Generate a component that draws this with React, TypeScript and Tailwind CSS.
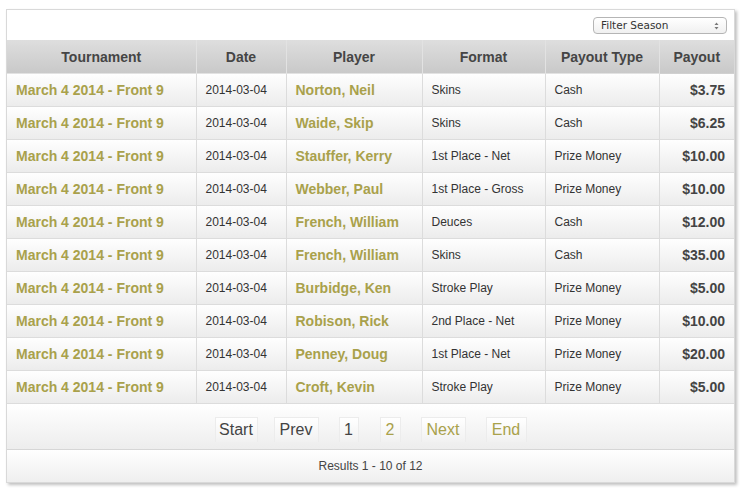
import React from "react";

const rows = [
  ["Norton, Neil", "Skins", "Cash", "$3.75"],
  ["Waide, Skip", "Skins", "Cash", "$6.25"],
  ["Stauffer, Kerry", "1st Place - Net", "Prize Money", "$10.00"],
  ["Webber, Paul", "1st Place - Gross", "Prize Money", "$10.00"],
  ["French, William", "Deuces", "Cash", "$12.00"],
  ["French, William", "Skins", "Cash", "$35.00"],
  ["Burbidge, Ken", "Stroke Play", "Prize Money", "$5.00"],
  ["Robison, Rick", "2nd Place - Net", "Prize Money", "$10.00"],
  ["Penney, Doug", "1st Place - Net", "Prize Money", "$20.00"],
  ["Croft, Kevin", "Stroke Play", "Prize Money", "$5.00"],
];

const cols = [
  { name: "Tournament", w: "w-[189px]" },
  { name: "Date", w: "w-[90px]" },
  { name: "Player", w: "w-[136px]" },
  { name: "Format", w: "w-[123px]" },
  { name: "Payout Type", w: "w-[114px]" },
  { name: "Payout", w: "w-[75px]" },
];

const btn = "h-[25px] flex items-center justify-center border-t border-x border-[#ececec] bg-gradient-to-b from-white to-[#f1f1f1]";

export default function App() {
  return (
    <div className="w-[743px] h-[495px] bg-white pt-[9px] pl-[6px]" style={{ fontFamily: '"Liberation Sans", Arial, sans-serif' }}>
      <div className="w-[729px] border border-[#d9d9d9] bg-white shadow-[2px_2px_3px_rgba(0,0,0,0.25)]">
        <div className="h-[30px] flex items-center justify-end pr-[7px] pt-[1px]">
          <div className="w-[134px] h-[17px] rounded-[4px] border border-[#b5b5b5] bg-gradient-to-b from-white to-[#f0f0f0] flex items-center justify-between pl-[7px] pr-[7px] text-[#333]" style={{ fontFamily: '"DejaVu Sans", sans-serif', fontSize: "10.5px" }}>
            <span>Filter Season</span>
            <svg width="5" height="8" viewBox="0 0 5 8">
              <path d="M0.5 3 L2.5 0.5 L4.5 3 Z" fill="#777" />
              <path d="M0.5 5 L2.5 7.5 L4.5 5 Z" fill="#777" />
            </svg>
          </div>
        </div>
        <table className="border-collapse table-fixed w-[727px]">
          <thead>
            <tr className="h-[33px] bg-gradient-to-b from-[#dedede] to-[#c9c9c9]">
              {cols.map((c, i) => (
                <th key={c.name} className={`${c.w} text-[14px] font-bold text-[#454545] text-center ${i < 5 ? "border-r border-[#e2e2e2]" : ""} border-b border-[#d0d0d0] p-0 pt-[2px]`}>
                  {c.name}
                </th>
              ))}
            </tr>
          </thead>
          <tbody>
            {rows.map((r, idx) => (
              <tr key={idx} className="h-[33px] bg-gradient-to-b from-white to-[#ececec]">
                <td className="p-0 pt-[2px] pl-[9px] text-[14px] font-bold text-[#a9a14b] border-r border-b border-[#dcdcdc]">March 4 2014 - Front 9</td>
                <td className="p-0 pt-[1px] pl-[9px] text-[12px] text-[#333] border-r border-b border-[#dcdcdc]">2014-03-04</td>
                <td className="p-0 pt-[2px] pl-[9px] text-[14px] font-bold text-[#a9a14b] border-r border-b border-[#dcdcdc]">{r[0]}</td>
                <td className="p-0 pt-[1px] pl-[9px] text-[12px] text-[#333] border-r border-b border-[#dcdcdc]">{r[1]}</td>
                <td className="p-0 pt-[1px] pl-[9px] text-[12px] text-[#333] border-r border-b border-[#dcdcdc]">{r[2]}</td>
                <td className="p-0 pt-[2px] pr-[9px] text-[14px] font-bold text-[#444] text-right border-b border-[#dcdcdc]">{r[3]}</td>
              </tr>
            ))}
          </tbody>
        </table>
        <div className="h-[46px] border-b border-[#d6d6d6] bg-gradient-to-b from-white to-[#ededed] flex items-center justify-center text-[16px] pt-[6px]">
          <span className={`${btn} w-[43px] text-[#444]`}>Start</span>
          <span className={`${btn} w-[45px] ml-[16px] text-[#444]`}>Prev</span>
          <span className={`${btn} w-[20px] ml-[20px] text-[#444]`}>1</span>
          <span className={`${btn} w-[21px] ml-[21px] text-[#a9a14b]`}>2</span>
          <span className={`${btn} w-[45px] ml-[20px] text-[#a9a14b]`}>Next</span>
          <span className={`${btn} w-[41px] ml-[20px] text-[#a9a14b]`}>End</span>
        </div>
        <div className="h-[32px] bg-gradient-to-b from-white to-[#efefef] flex items-center justify-center text-[12px] text-[#444]">
          Results 1 - 10 of 12
        </div>
      </div>
    </div>
  );
}
